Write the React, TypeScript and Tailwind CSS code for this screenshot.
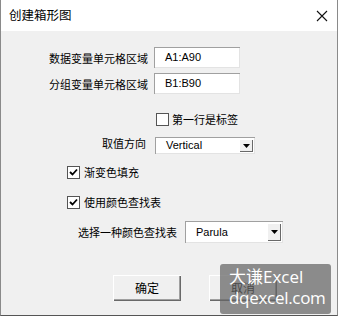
import React from "react";

const cjk = { fontFamily: '"Noto Sans CJK SC", "Noto Sans", sans-serif' };
const lat = { fontFamily: '"Liberation Sans", "Noto Sans CJK SC", sans-serif' };
const wm = { fontFamily: '"Open Sans", "Noto Sans CJK SC", sans-serif' };

function Check({ checked }: { checked?: boolean }) {
  return (
    <div className="w-[13px] h-[13px] bg-white border border-[#555] flex items-center justify-center shrink-0">
      {checked && (
        <svg width="9" height="9" viewBox="0 0 9 9">
          <path d="M1 4 L3.5 6.5 L8 1.5" stroke="#000" strokeWidth="1.8" fill="none" />
        </svg>
      )}
    </div>
  );
}

function Combo({ value, w, h }: { value: string; w: string; h: string }) {
  return (
    <div
      className={`${w} ${h} bg-white flex items-center shadow-[inset_1px_1px_0_#a0a0a0,inset_-1px_-1px_0_#e3e3e3] pl-[11px] pr-[2px] text-[11px] text-black`}
      style={lat}
    >
      <span className="flex-1">{value}</span>
      <div className="w-[14px] h-[calc(100%-4px)] bg-[#f0f0f0] shadow-[inset_1px_1px_0_#fff,inset_-1px_-1px_0_#696969] flex items-center justify-center">
        <svg width="7" height="4" viewBox="0 0 7 4">
          <path d="M0 0 H7 L3.5 4 Z" fill="#000" />
        </svg>
      </div>
    </div>
  );
}

function Btn({ label }: { label: string }) {
  return (
    <div
      className="w-[68px] h-[26px] bg-[#f0f0f0] shadow-[inset_1px_1px_0_#ffffff,inset_-1px_-1px_0_#696969,inset_-2px_-2px_0_#a0a0a0] flex items-center justify-center text-[12px] text-black"
      style={cjk}
    >
      {label}
    </div>
  );
}

export default function App() {
  return (
    <div className="relative w-[338px] h-[316px] bg-[#f0f0f0] border-x border-b border-x-[#8a8a8a] border-b-[#555] overflow-hidden flex flex-col">
      <div className="h-[31px] bg-white flex items-center justify-between pl-[8px] pr-[9px] shrink-0">
        <span className="text-[12.5px] text-black" style={cjk}>创建箱形图</span>
        <svg width="12" height="12" viewBox="0 0 12 12">
          <path d="M1 1 L11 11 M11 1 L1 11" stroke="#111" strokeWidth="1.1" />
        </svg>
      </div>

      <div className="flex flex-col text-[11px] text-black" style={cjk}>
        <div className="flex items-center mt-[16px] pl-[48px] gap-[6px]">
          <span className="w-[99px] leading-[14px]">数据变量单元格区域</span>
          <div
            className="w-[86px] h-[21px] bg-white shadow-[inset_1px_1px_0_#a0a0a0,inset_-1px_-1px_0_#e3e3e3] flex items-center pl-[11px]"
            style={lat}
          >
            A1:A90
          </div>
        </div>
        <div className="flex items-center mt-[5px] pl-[48px] gap-[6px]">
          <span className="w-[99px] leading-[14px]">分组变量单元格区域</span>
          <div
            className="w-[86px] h-[21px] bg-white shadow-[inset_1px_1px_0_#a0a0a0,inset_-1px_-1px_0_#e3e3e3] flex items-center pl-[11px]"
            style={lat}
          >
            B1:B90
          </div>
        </div>

        <div className="flex items-center mt-[18px] pl-[155px] gap-[3px]">
          <Check />
          <span className="leading-[14px]">第一行是标签</span>
        </div>

        <div className="flex items-center mt-[11px] pl-[101px] gap-[9px]">
          <span className="leading-[14px] -mt-[6px]">取值方向</span>
          <Combo value="Vertical" w="w-[100px]" h="h-[17px]" />
        </div>

        <div className="flex items-center mt-[11px] pl-[66px] gap-[4px]">
          <Check checked />
          <span className="leading-[14px]">渐变色填充</span>
        </div>

        <div className="flex items-center mt-[16px] pl-[66px] gap-[4px]">
          <Check checked />
          <span className="leading-[14px]">使用颜色查找表</span>
        </div>

        <div className="flex items-center mt-[12px] pl-[77px] gap-[8px]">
          <span className="leading-[14px]">选择一种颜色查找表</span>
          <Combo value="Parula" w="w-[98px]" h="h-[22px]" />
        </div>

        <div className="flex mt-[32px] pl-[112px] gap-[28px]">
          <Btn label="确定" />
          <Btn label="取消" />
        </div>
      </div>

      <div className="absolute left-[219px] top-[264px] w-[111px] h-[50px] rounded-[3px] bg-[rgba(100,100,100,0.72)] flex flex-col items-start pl-[9px] pt-[2px] text-white leading-[21px]">
        <span className="text-[17px]" style={wm}>大谦Excel</span>
        <span className="text-[17px] tracking-[-0.3px]" style={wm}>dqexcel.com</span>
      </div>
    </div>
  );
}
